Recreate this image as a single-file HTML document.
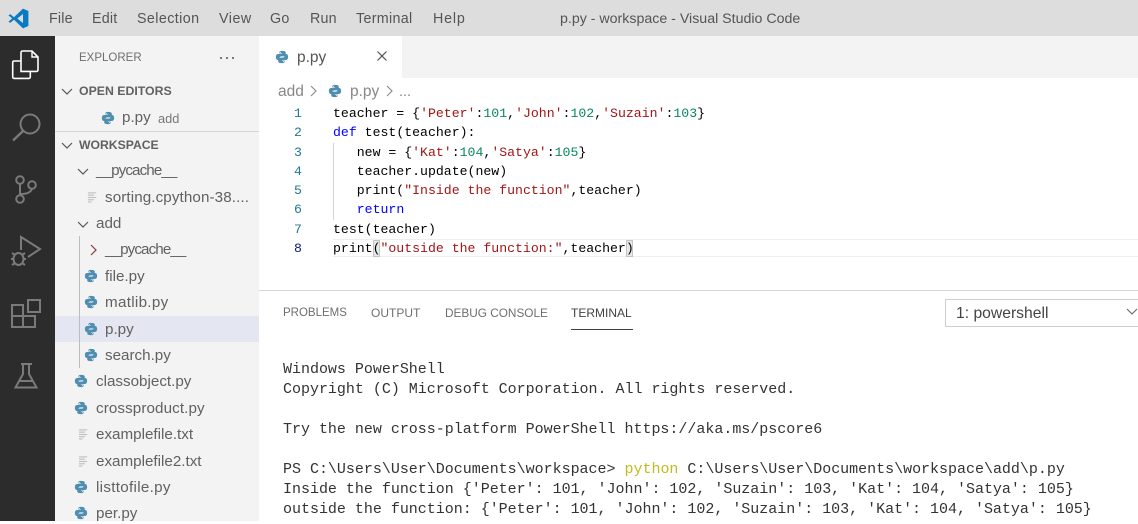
<!DOCTYPE html>
<html><head><meta charset="utf-8">
<style>
html,body{margin:0;padding:0}
body{width:1138px;height:521px;overflow:hidden;position:relative;background:#fff;font-family:"Liberation Sans",sans-serif;color:#616161}
.a{position:absolute;white-space:pre}
.r{position:absolute}
.t{font-size:15.2px;line-height:20px;color:#616161}
.m{font-size:14.3px;line-height:20px;color:#555;letter-spacing:.2px}
.c{font-family:"Liberation Mono",monospace;font-size:13.2px;line-height:19px;color:#000;left:333px}
.n{font-family:"Liberation Mono",monospace;font-size:13.2px;line-height:19px;color:#237893;left:294px}
.x{font-family:"Liberation Mono",monospace;font-size:15px;line-height:20px;color:#333;left:283px;letter-spacing:-.015px}
.p{font-size:11.8px;line-height:16px;color:#6f6f6f}
.s{color:#a31515}.d{color:#09885a}.k{color:#0000ff}
svg{position:absolute;overflow:visible}
</style></head><body>
<svg width="0" height="0" style="position:absolute"><defs>
<symbol id="py" viewBox="0 0 16 16"><path fill="#4f8eb0" d="M7.900 1C5 1 5.100 2.300 5.100 2.300V4h3v.6H3.600S1 4.400 1 8c0 3.600 2.300 3.400 2.300 3.400H5V9.600s-.1-2.300 2.200-2.300h3s2.100 0 2.100-2V2.900S12.600 1 7.900 1zM6.300 2.100a.6.6 0 1 1 0 1.200.6.6 0 0 1 0-1.200z"/><path fill="#4f8eb0" d="M8.100 15c2.900 0 2.800-1.300 2.800-1.300V12h-3v-.6h4.500S15 11.600 15 8c0-3.600-2.300-3.400-2.300-3.400H11v1.800s.1 2.300-2.200 2.300h-3s-2.100 0-2.100 2v2.400S3.400 15 8.100 15zm1.600-1.100a.6.6 0 1 1 0-1.200.6.6 0 0 1 0 1.200z"/></symbol>
<symbol id="tx" viewBox="0 0 12 12"><path stroke="#c4c4c4" stroke-width="1.400" fill="none" d="M1 1.500h9M1 4h6.500M1 6.500h9M1 9h6.500M1 11.500h4"/></symbol>
</defs></svg>

<!-- title bar -->
<div class="r" style="left:0;top:0;width:1138px;height:36px;background:#dddddd"></div>
<svg style="left:8px;top:8px" width="21" height="21" viewBox="0 0 21 21"><path fill="#0a7ac4" d="M15 .6 20.400 3v15l-5.400 2.400L6 11.800 2.300 14.700.4 13.700 4.200 10.500.4 7.300l1.900-1L6 9.200zM15 6 9.300 10.500 15 15z"/></svg>
<div class="a m" style="left:49px;top:9px">File</div>
<div class="a m" style="left:92px;top:9px">Edit</div>
<div class="a m" style="left:137px;top:9px;letter-spacing:.4px">Selection</div>
<div class="a m" style="left:219px;top:9px;letter-spacing:.5px">View</div>
<div class="a m" style="left:270px;top:9px">Go</div>
<div class="a m" style="left:310px;top:9px">Run</div>
<div class="a m" style="left:356px;top:9px;letter-spacing:.3px">Terminal</div>
<div class="a m" style="left:433px;top:9px;letter-spacing:.8px">Help</div>
<div class="a" style="left:560px;top:10px;font-size:14.200px;line-height:18px;color:#555">p.py - workspace - Visual Studio Code</div>

<!-- activity bar -->
<div class="r" style="left:0;top:36px;width:55px;height:485px;background:#2c2c2c"></div>
<svg style="left:0;top:36px" width="55" height="485" viewBox="0 36 55 485" fill="none">
<path stroke="#fff" stroke-width="1.600" d="M21 61H14a1.500 1.500 0 0 0-1.300 1.500v14.500A1.500 1.500 0 0 0 14 78.400h15a1.500 1.500 0 0 0 1.300-1.400V71.500"/>
<path stroke="#fff" stroke-width="1.600" d="M21 71.400V52.500A1.500 1.500 0 0 1 22.500 51H32l6 6v13a1.500 1.500 0 0 1-1.500 1.400z"/>
<path stroke="#fff" stroke-width="1.400" d="M32 51v6h6"/>
<g stroke="#7a7a7a" stroke-width="2">
<circle cx="30" cy="124" r="9.500"/><path d="M23 131 13 140.500" stroke-width="2.400"/>
<circle cx="20" cy="180" r="3.800"/><circle cx="32" cy="185" r="3.800"/><circle cx="20" cy="199" r="3.800"/>
<path d="M20 184v11M21 194c6 0 10-2 11-5.500"/>
<path d="M21 250v-13l19 12-12 8"/>
<ellipse cx="18.500" cy="259" rx="5" ry="6"/><path d="M12 253l3 2M25 253l-3 2M11 259h3M26 259h-3M12 265l3-2M25 265l-3-2"/>
<path d="M12 305h11v22H12zM12 316h23v11H23M28 300h12v12H28z"/>
<path d="M21 364h11M23 364v10L15.500 387.500h21L29 374V364M19 381h14"/>
</g></svg>

<!-- sidebar -->
<div class="r" style="left:55px;top:36px;width:204px;height:485px;background:#f3f3f3"></div>
<div class="a" style="left:79px;top:50px;font-size:11.500px;line-height:16px;color:#6f6f6f">EXPLORER</div>
<div class="r" style="left:220px;top:57px;width:2px;height:2px;background:#777;box-shadow:6px 0 #777,12px 0 #777"></div>
<svg style="left:60px;top:85px" width="14" height="14" fill="none"><path stroke="#555" stroke-width="1.200" d="M2 4l5 5 5-5"/></svg>
<div class="a" style="left:79px;top:83px;font-size:12.300px;line-height:16px;font-weight:bold;color:#616161">OPEN EDITORS</div>
<svg style="left:101px;top:111px" width="14" height="14"><use href="#py"/></svg>
<div class="a t" style="left:122px;top:108px">p.py</div>
<div class="a" style="left:158px;top:110px;font-size:12.800px;line-height:17px;color:#777">add</div>
<div class="r" style="left:55px;top:131px;width:204px;height:1px;background:#d6d6d6"></div>
<svg style="left:60px;top:139px" width="14" height="14" fill="none"><path stroke="#555" stroke-width="1.200" d="M2 4l5 5 5-5"/></svg>
<div class="a" style="left:79px;top:137px;font-size:12.200px;line-height:16px;font-weight:bold;color:#616161">WORKSPACE</div>
<svg style="left:76px;top:165px" width="14" height="14" fill="none"><path stroke="#555" stroke-width="1.200" d="M2 4l5 5 5-5"/></svg>
<div class="a t" style="left:96px;top:161px;letter-spacing:-.9px">__pycache__</div>
<svg style="left:87px;top:191px" width="11" height="12"><use href="#tx"/></svg>
<div class="a t" style="left:105px;top:188px;width:147px;overflow:hidden;letter-spacing:.1px">sorting.cpython-38....</div>
<svg style="left:76px;top:218px" width="14" height="14" fill="none"><path stroke="#555" stroke-width="1.200" d="M2 4l5 5 5-5"/></svg>
<div class="a t" style="left:96px;top:214px">add</div>
<div class="r" style="left:79px;top:236px;width:1px;height:132px;background:#bdbdbd"></div>
<svg style="left:88px;top:243px" width="12" height="14" fill="none"><path stroke="#8a3a3a" stroke-width="1.200" d="M3 2l5 5-5 5"/></svg>
<div class="a t" style="left:105px;top:240px;letter-spacing:-.9px">__pycache__</div>
<svg style="left:84px;top:269px" width="14" height="14"><use href="#py"/></svg>
<div class="a t" style="left:105px;top:267px">file.py</div>
<svg style="left:84px;top:295px" width="14" height="14"><use href="#py"/></svg>
<div class="a t" style="left:105px;top:293px;letter-spacing:.3px">matlib.py</div>
<div class="r" style="left:55px;top:316px;width:204px;height:26px;background:#e4e6f1"></div>
<div class="r" style="left:79px;top:316px;width:1px;height:26px;background:#bdbdbd"></div>
<svg style="left:84px;top:322px" width="14" height="14"><use href="#py"/></svg>
<div class="a t" style="left:105px;top:320px">p.py</div>
<svg style="left:84px;top:348px" width="14" height="14"><use href="#py"/></svg>
<div class="a t" style="left:105px;top:346px">search.py</div>
<svg style="left:74px;top:374px" width="14" height="14"><use href="#py"/></svg>
<div class="a t" style="left:96px;top:372px">classobject.py</div>
<svg style="left:74px;top:401px" width="14" height="14"><use href="#py"/></svg>
<div class="a t" style="left:96px;top:399px;letter-spacing:.1px">crossproduct.py</div>
<svg style="left:78px;top:428px" width="11" height="12"><use href="#tx"/></svg>
<div class="a t" style="left:96px;top:425px">examplefile.txt</div>
<svg style="left:78px;top:455px" width="11" height="12"><use href="#tx"/></svg>
<div class="a t" style="left:96px;top:452px">examplefile2.txt</div>
<svg style="left:74px;top:480px" width="14" height="14"><use href="#py"/></svg>
<div class="a t" style="left:96px;top:478px;letter-spacing:.3px">listtofile.py</div>
<svg style="left:74px;top:506px" width="14" height="14"><use href="#py"/></svg>
<div class="a t" style="left:96px;top:504px">per.py</div>

<!-- tabs -->
<div class="r" style="left:402px;top:36px;width:736px;height:42px;background:#f3f3f3"></div>
<svg style="left:275px;top:50px" width="14" height="14"><use href="#py"/></svg>
<div class="a" style="left:297px;top:48px;font-size:15.500px;line-height:20px;color:#555">p.py</div>
<svg style="left:376px;top:50px" width="12" height="12" fill="none"><path stroke="#555" stroke-width="1.200" d="M1.500 1.500l9 9M10.500 1.500l-9 9"/></svg>
<div class="a" style="left:278px;top:82px;font-size:15.500px;line-height:20px;color:#888">add</div>
<svg style="left:309px;top:84px" width="10" height="14" fill="none"><path stroke="#888" stroke-width="1.100" d="M2 2l5 5-5 5"/></svg>
<svg style="left:328px;top:84px" width="14" height="14"><use href="#py"/></svg>
<div class="a" style="left:350px;top:82px;font-size:15.500px;line-height:20px;color:#888">p.py</div>
<svg style="left:385px;top:84px" width="10" height="14" fill="none"><path stroke="#888" stroke-width="1.100" d="M2 2l5 5-5 5"/></svg>
<div class="a" style="left:399px;top:82px;font-size:14.500px;line-height:20px;color:#888">...</div>

<!-- editor -->
<div class="r" style="left:333px;top:239px;width:805px;height:18px;border-top:1px solid #eee;border-bottom:1px solid #eee;box-sizing:border-box"></div>
<div class="r" style="left:333px;top:143px;width:1px;height:77px;background:#d3d3d3"></div>
<div class="r" style="left:373px;top:240px;width:7px;height:17px;background:#e8e8e8;border:1px solid #c4c4c4;box-sizing:border-box"></div>
<div class="r" style="left:626px;top:240px;width:7px;height:17px;background:#e8e8e8;border:1px solid #c4c4c4;box-sizing:border-box"></div>
<div class="a n" style="top:104px">1</div>
<div class="a n" style="top:123px">2</div>
<div class="a n" style="top:143px">3</div>
<div class="a n" style="top:162px">4</div>
<div class="a n" style="top:181px">5</div>
<div class="a n" style="top:200px">6</div>
<div class="a n" style="top:220px">7</div>
<div class="a n" style="top:239px;color:#0b216f">8</div>
<div class="a c" style="top:104px">teacher = {<span class="s">'Peter'</span>:<span class="d">101</span>,<span class="s">'John'</span>:<span class="d">102</span>,<span class="s">'Suzain'</span>:<span class="d">103</span>}</div>
<div class="a c" style="top:123px"><span class="k">def</span> test(teacher):</div>
<div class="a c" style="top:143px">   new = {<span class="s">'Kat'</span>:<span class="d">104</span>,<span class="s">'Satya'</span>:<span class="d">105</span>}</div>
<div class="a c" style="top:162px">   teacher.update(new)</div>
<div class="a c" style="top:181px">   print(<span class="s">"Inside the function"</span>,teacher)</div>
<div class="a c" style="top:200px">   <span class="k">return</span></div>
<div class="a c" style="top:220px">test(teacher)</div>
<div class="a c" style="top:239px">print(<span class="s">"outside the function:"</span>,teacher)</div>

<!-- panel -->
<div class="r" style="left:259px;top:290px;width:879px;height:1px;background:#d8d8d8"></div>
<div class="a p" style="left:283px;top:305px;font-size:11.500px">PROBLEMS</div>
<div class="a p" style="left:371px;top:305px;font-size:12px">OUTPUT</div>
<div class="a p" style="left:445px;top:305px">DEBUG CONSOLE</div>
<div class="a p" style="left:571px;top:305px;font-size:12px;color:#424242">TERMINAL</div>
<div class="r" style="left:571px;top:329px;width:62px;height:1px;background:#424242"></div>
<div class="r" style="left:945px;top:299px;width:200px;height:28px;border:1px solid #cecece;box-sizing:border-box;background:#fff"></div>
<div class="a" style="left:956px;top:304px;font-size:15.700px;line-height:20px;color:#444">1: powershell</div>
<svg style="left:1126px;top:307px" width="12" height="10" fill="none"><path stroke="#666" stroke-width="1.100" d="M1 2l5 5 5-5"/></svg>
<div class="a x" style="top:360px">Windows PowerShell</div>
<div class="a x" style="top:380px">Copyright (C) Microsoft Corporation. All rights reserved.</div>
<div class="a x" style="top:420px">Try the new cross-platform PowerShell https://aka.ms/pscore6</div>
<div class="a x" style="top:460px">PS C:\Users\User\Documents\workspace&gt; <span style="color:#c4bb1c">python</span> C:\Users\User\Documents\workspace\add\p.py</div>
<div class="a x" style="top:480px">Inside the function {'Peter': 101, 'John': 102, 'Suzain': 103, 'Kat': 104, 'Satya': 105}</div>
<div class="a x" style="top:500px">outside the function: {'Peter': 101, 'John': 102, 'Suzain': 103, 'Kat': 104, 'Satya': 105}</div>
</body></html>
